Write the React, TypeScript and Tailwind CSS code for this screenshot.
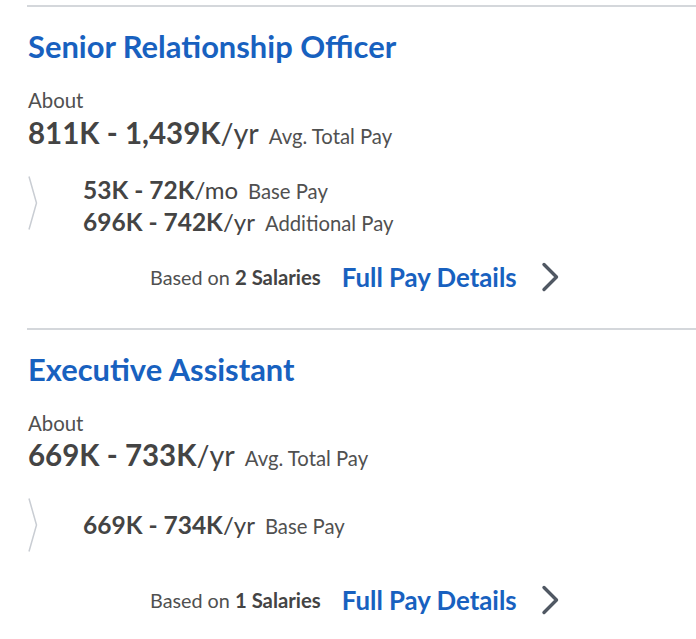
import React from "react";

type Sub = { range: string; unit: string; label: string };
type Job = { title: string; range: string; unit: string; subs: Sub[]; count: number };

const jobs: Job[] = [
  {
    title: "Senior Relationship Officer",
    range: "811K - 1,439K",
    unit: "/yr",
    subs: [
      { range: "53K - 72K", unit: "/mo", label: "Base Pay" },
      { range: "696K - 742K", unit: "/yr", label: "Additional Pay" },
    ],
    count: 2,
  },
  {
    title: "Executive Assistant",
    range: "669K - 733K",
    unit: "/yr",
    subs: [{ range: "669K - 734K", unit: "/yr", label: "Base Pay" }],
    count: 1,
  },
];

function ThinChevron() {
  return (
    <svg width="10" height="54" viewBox="0 0 10 54" className="shrink-0">
      <path d="M1 0.5 L8.5 27 L1 53.5" fill="none" stroke="#c9cdd3" strokeWidth="1.5" />
    </svg>
  );
}

function Chevron() {
  return (
    <svg width="20" height="30" viewBox="0 0 20 30" className="shrink-0">
      <path d="M3 2.5 L15.5 15 L3 27.5" fill="none" stroke="#505863" strokeWidth="3.4" strokeLinecap="round" strokeLinejoin="round" />
    </svg>
  );
}

function Section({ job }: { job: Job }) {
  const n = job.subs.length;
  return (
    <div className="ml-[27px] border-t-2 border-[#d4d7db] pl-[1px]">
      <div className="mt-[23px] h-[34px] text-[30.9px] leading-[34px] font-bold text-[#1861bf] whitespace-nowrap">{job.title}</div>
      <div className="mt-[24px] h-[24px] text-[20.4px] leading-[24px] text-[#505050]">About</div>
      <div className="mt-[4.5px] h-[32px] leading-[32px] text-[#444] whitespace-nowrap">
        <span className="text-[29.5px] font-bold">{job.range}</span>
        <span className="text-[28.8px]">{job.unit}</span>
        <span className="ml-[10px] text-[20.3px] text-[#505050]">Avg. Total Pay</span>
      </div>
      <div className="mt-[27px] flex h-[54px] items-start">
        <ThinChevron />
        <div className={n > 1 ? "ml-[45px] -mt-[2px]" : "ml-[45px] mt-[11px]"}>
          {job.subs.map((s) => (
            <div key={s.label} className="h-[32px] leading-[32px] text-[#444] whitespace-nowrap">
              <span className="text-[24.5px] font-bold">{s.range}</span>
              <span className="text-[24px]">{s.unit}</span>
              <span className="ml-[10px] text-[20.3px] text-[#505050]">{s.label}</span>
            </div>
          ))}
        </div>
      </div>
      <div className="mt-[31.5px] flex h-[32px] items-center pl-[122px] whitespace-nowrap">
        <div className="h-[32px] leading-[32px] text-[#505050]">
          <span className="text-[19.8px]">Based on </span>
          <span className="text-[20.3px] font-bold text-[#444]">{job.count} Salaries</span>
        </div>
        <div className="ml-[21px] h-[32px] text-[25.8px] leading-[32px] font-bold text-[#1861bf]">Full Pay Details</div>
        <div className="ml-[24px] flex items-center">
          <Chevron />
        </div>
      </div>
      <div className="h-[34.5px]" />
    </div>
  );
}

export default function App() {
  return (
    <div className="w-[696px] h-[639px] overflow-hidden bg-white pt-[5px]" style={{ fontFamily: "Lato, 'Noto Sans', sans-serif" }}>
      {jobs.map((j) => (
        <Section key={j.title} job={j} />
      ))}
    </div>
  );
}
